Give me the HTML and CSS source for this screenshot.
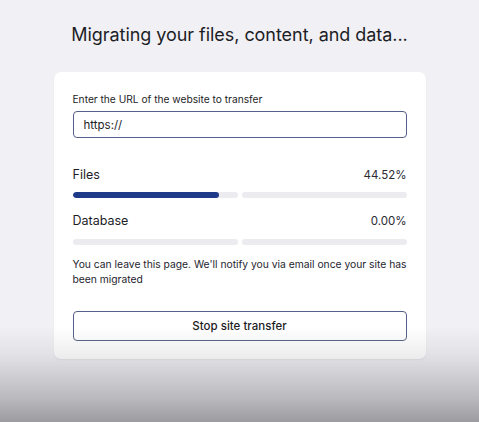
FILE: index.html
```html
<!DOCTYPE html>
<html lang="en">
<head>
<meta charset="utf-8">
<title>Migrating</title>
<link rel="stylesheet" href="styles.css">
</head>
<body>
<main class="page">
  <h1 class="title">Migrating your files, content, and data...</h1>
  <section class="card">
    <label class="field-label" for="url">Enter the URL of the website to transfer</label>
    <div class="input">https://</div>
    <div class="progress">
      <div class="progress-head"><span>Files</span><span class="pct">44.52%</span></div>
      <div class="bars">
        <div class="track"><div class="fill" style="width: 89%"></div></div>
        <div class="track"></div>
      </div>
    </div>
    <div class="progress">
      <div class="progress-head"><span>Database</span><span class="pct">0.00%</span></div>
      <div class="bars">
        <div class="track"></div>
        <div class="track"></div>
      </div>
    </div>
    <p class="note">You can leave this page. We'll notify you via email once your site has been migrated</p>
    <button class="stop" type="button">Stop site transfer</button>
  </section>
</main>
<div class="shade"></div>
</body>
</html>
```

FILE: styles.css
```css
html, body {
  margin: 0;
  padding: 0;
  height: 100%;
}
body {
  background: #f1f1f5;
  font-family: Inter, "Noto Sans", sans-serif;
  color: #1d1d26;
  overflow: hidden;
}
.page {
  display: flex;
  flex-direction: column;
  align-items: center;
  padding-top: 22px;
}
.title {
  margin: 0;
  font-size: 18px;
  font-weight: 400;
  line-height: 26px;
  letter-spacing: -0.05px;
}
.card {
  margin-top: 24px;
  width: 334px;
  padding: 20px 19px 18px;
  background: #fff;
  border-radius: 7px;
  box-shadow: 0 1px 2px rgba(0,0,0,0.06);
  display: flex;
  flex-direction: column;
}
.field-label {
  font-size: 10.2px;
  line-height: 14px;
}
.input {
  margin-top: 5px;
  height: 25px;
  border: 1px solid #56608a;
  border-radius: 4px;
  padding: 0 10px;
  display: flex;
  align-items: center;
  font-size: 11.5px;
}
.progress {
  display: flex;
  flex-direction: column;
}
.progress-head {
  display: flex;
  justify-content: space-between;
  font-size: 12.5px;
  line-height: 16px;
  margin-top: 29px;
}
.progress + .progress .progress-head { margin-top: 15px; }
.pct { color: #2a2a33; font-size: 11.5px; }
.bars {
  margin-top: 9px;
  display: flex;
  gap: 4px;
}
.progress + .progress .bars { margin-top: 10px; }
.track {
  flex: 1;
  height: 6px;
  border-radius: 3px;
  background: #ebebf0;
  overflow: hidden;
}
.fill {
  height: 100%;
  background: #1f3a88;
  border-radius: 3px;
}
.note {
  margin: 12px 0 0;
  font-size: 10.3px;
  line-height: 15px;
  color: #25252e;
}
.stop {
  margin-top: 24px;
  height: 30px;
  border: 1px solid #56608a;
  border-radius: 4px;
  background: #fff;
  font-family: inherit;
  font-size: 11.5px;
  font-weight: 500;
  color: #1d1d26;
}
.shade {
  position: fixed;
  left: 0;
  right: 0;
  bottom: 0;
  height: 95px;
  pointer-events: none;
  background: linear-gradient(to bottom, rgba(140,140,145,0) 0%, rgba(140,140,145,0.15) 30%, rgba(140,140,145,0.55) 75%, rgba(140,140,145,0.85) 100%);
}
```
